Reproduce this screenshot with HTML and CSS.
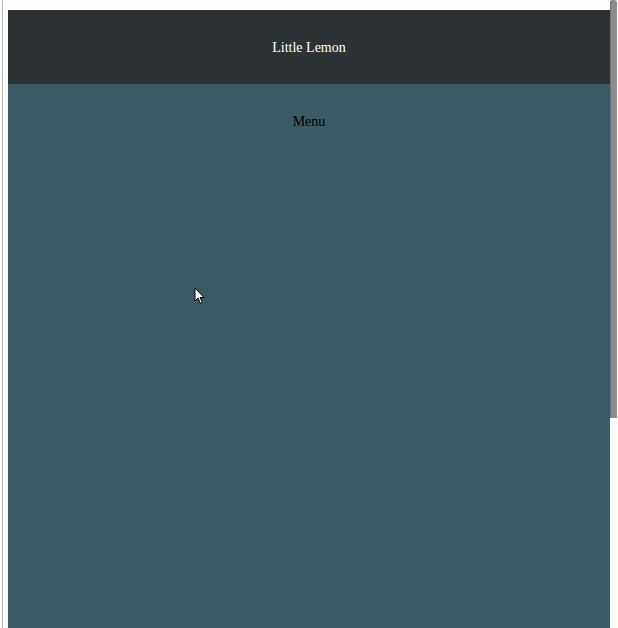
FILE: index.html
```html
<!DOCTYPE html>
<html lang="en">
<head>
<meta charset="utf-8">
<title>Little Lemon</title>
<link rel="stylesheet" href="styles.css">
</head>
<body>
  <header class="site-header">
    <p class="brand">Little Lemon</p>
  </header>
  <main class="site-main">
    <p class="menu-title">Menu</p>
  </main>
  <div class="scrollbar" aria-hidden="true"><div class="scrollbar-thumb"></div></div>
  <svg class="cursor" width="12" height="18" viewBox="0 0 12 18" aria-hidden="true">
    <path d="M1 1 L1 14 L4 11 L6.5 16.5 L8.5 15.5 L6 10.5 L10 10.5 Z" fill="#fff" stroke="#000" stroke-width="1"/>
  </svg>
</body>
</html>
```
FILE: styles.css
```css
html {
  background: #ffffff;
  border-left: 1px solid #b4b4b4;
  margin-left: 2px;
}
body {
  margin: 10px 8px 0 5px;
  font-family: "Liberation Serif", "Times New Roman", serif;
  font-size: 14px;
}
.site-header {
  background: #2d3334;
  height: 74px;
  display: flex;
  align-items: center;
  justify-content: center;
  padding-top: 2px;
  box-sizing: border-box;
}
.brand {
  margin: 0;
  color: #ffffff;
}
.site-main {
  background: #3a5b63;
  min-height: 859px;
  display: flex;
  flex-direction: column;
  align-items: center;
  padding-top: 30px;
  box-sizing: border-box;
}
.menu-title {
  margin: 0;
  color: #000000;
}
.scrollbar {
  position: fixed;
  top: 0;
  right: 1px;
  width: 7px;
  height: 628px;
  background: #ffffff;
}
.scrollbar-thumb {
  height: 418px;
  background: #8c8c8c;
  border-radius: 3px 3px 0 0;
  border-left: 1px solid #6e6e6e;
  box-sizing: border-box;
}
.cursor {
  position: absolute;
  left: 194px;
  top: 287px;
}
```
